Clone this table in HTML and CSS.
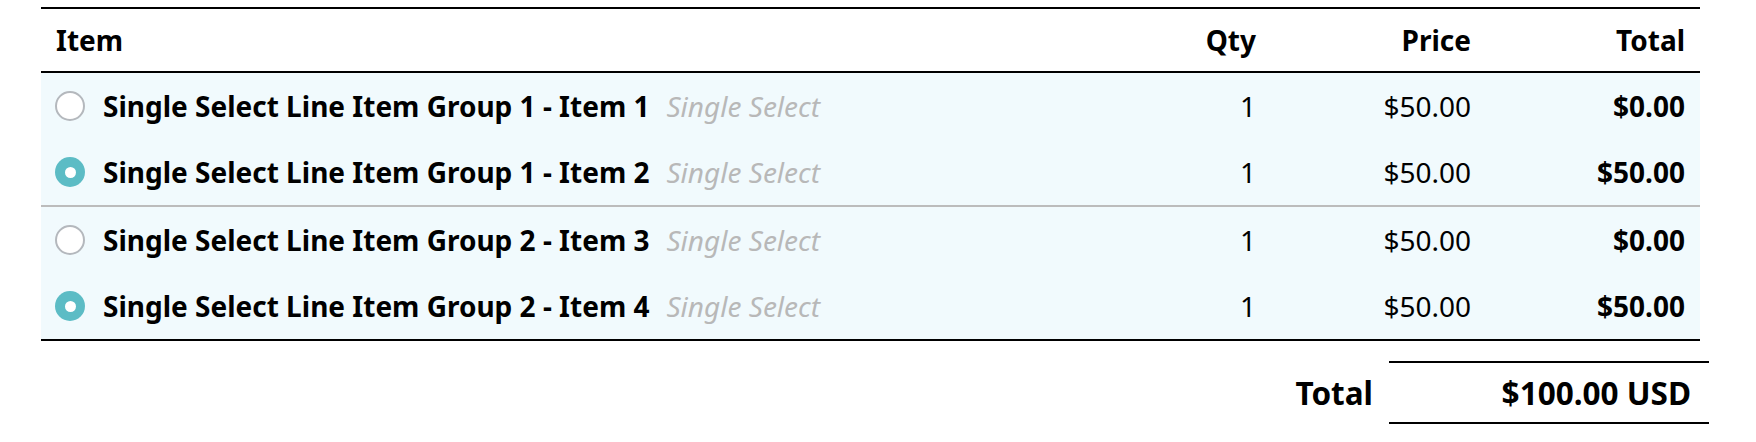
FILE: index.html
```html
<!DOCTYPE html>
<html lang="en">
<head>
<meta charset="utf-8">
<title>Line Items</title>
<link rel="stylesheet" href="styles.css">
</head>
<body>
<div class="page">
  <div class="table">
    <div class="row head">
      <div class="cell item">Item</div>
      <div class="cell num">Qty</div>
      <div class="cell num">Price</div>
      <div class="cell num">Total</div>
    </div>
    <div class="group">
      <div class="row">
        <div class="cell item"><span class="radio"></span><span class="name">Single Select Line Item Group 1 - Item 1</span><span class="tag">Single Select</span></div>
        <div class="cell num reg">1</div>
        <div class="cell num reg">$50.00</div>
        <div class="cell num">$0.00</div>
      </div>
      <div class="row">
        <div class="cell item"><span class="radio on"></span><span class="name">Single Select Line Item Group 1 - Item 2</span><span class="tag">Single Select</span></div>
        <div class="cell num reg">1</div>
        <div class="cell num reg">$50.00</div>
        <div class="cell num">$50.00</div>
      </div>
    </div>
    <div class="group last">
      <div class="row">
        <div class="cell item"><span class="radio"></span><span class="name">Single Select Line Item Group 2 - Item 3</span><span class="tag">Single Select</span></div>
        <div class="cell num reg">1</div>
        <div class="cell num reg">$50.00</div>
        <div class="cell num">$0.00</div>
      </div>
      <div class="row">
        <div class="cell item"><span class="radio on"></span><span class="name">Single Select Line Item Group 2 - Item 4</span><span class="tag">Single Select</span></div>
        <div class="cell num reg">1</div>
        <div class="cell num reg">$50.00</div>
        <div class="cell num">$50.00</div>
      </div>
    </div>
  </div>
  <div class="totals">
    <div class="total-label">Total</div>
    <div class="total-value">$100.00 USD</div>
  </div>
</div>
</body>
</html>
```

FILE: styles.css
```css
html, body {
  margin: 0;
  padding: 0;
  background: #ffffff;
}

body {
  font-family: "Noto Sans", "Open Sans", "Liberation Sans", sans-serif;
  color: #000000;
}

.page {
  padding: 7px 0 0 41px;
  width: 1668px;
}

.table {
  width: 1659px;
  border-top: 2px solid #000000;
  border-bottom: 2px solid #000000;
}

.row {
  display: grid;
  grid-template-columns: 1fr 215px 215px 214px;
  height: 66px;
  align-items: center;
  font-size: 28px;
  font-weight: 700;
}

.row.head {
  height: 62px;
  border-bottom: 2px solid #000000;
}

.group {
  background: #f1fafd;
  border-bottom: 2px solid #bcbcbc;
}

.group.last {
  border-bottom: none;
}

.cell {
  padding: 0 15px;
  white-space: nowrap;
}

.cell.item {
  display: flex;
  align-items: center;
  padding-left: 15px;
}

.cell.num {
  text-align: right;
}

.cell.reg {
  font-weight: 400;
}

.radio {
  box-sizing: border-box;
  width: 30px;
  height: 30px;
  border-radius: 50%;
  border: 2px solid #b4b8bd;
  background: #ffffff;
  margin-left: -1px;
  margin-right: 18px;
  flex: none;
  display: flex;
  align-items: center;
  justify-content: center;
}

.radio.on {
  border: none;
  background: #5cbcc5;
}

.radio.on::after {
  content: "";
  width: 11px;
  height: 11px;
  border-radius: 50%;
  background: #ffffff;
}

.tag {
  margin-left: 17px;
  font-style: italic;
  font-weight: 400;
  color: #b8b8b8;
}

.totals {
  display: flex;
  justify-content: flex-end;
  align-items: center;
  margin-top: 20px;
  font-size: 31.5px;
  font-weight: 700;
}

.total-label {
  margin-right: 16px;
}

.total-value {
  box-sizing: border-box;
  width: 320px;
  height: 63px;
  border-top: 2px solid #000000;
  border-bottom: 2px solid #000000;
  display: flex;
  align-items: center;
  justify-content: flex-end;
  padding-right: 18px;
}
```
